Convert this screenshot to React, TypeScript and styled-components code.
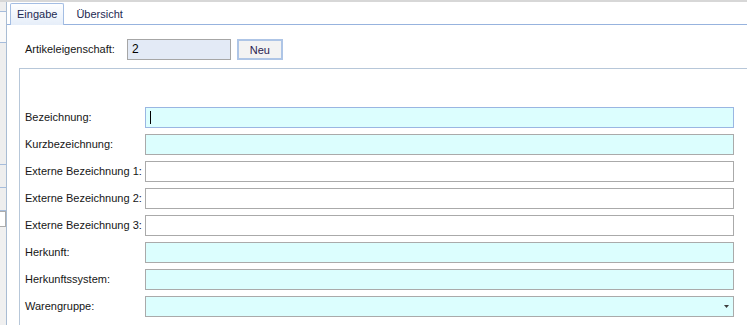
import React from 'react';
import styled, { createGlobalStyle } from 'styled-components';

type Tone = 'cyan' | 'white';

interface FieldDef {
    label: string;
    tone: Tone;
    focused?: boolean;
    dropdown?: boolean;
}

const fields: FieldDef[] = [
    { label: 'Bezeichnung:', tone: 'cyan', focused: true },
    { label: 'Kurzbezeichnung:', tone: 'cyan' },
    { label: 'Externe Bezeichnung 1:', tone: 'white' },
    { label: 'Externe Bezeichnung 2:', tone: 'white' },
    { label: 'Externe Bezeichnung 3:', tone: 'white' },
    { label: 'Herkunft:', tone: 'cyan' },
    { label: 'Herkunftssystem:', tone: 'cyan' },
    { label: 'Warengruppe:', tone: 'cyan', dropdown: true },
];

const DropArrow = () => (
    <svg width="6" height="4" viewBox="0 0 6 4">
        <polygon points="0,0 5,0 2.5,3" fill="#3c3c3c" />
    </svg>
);

export default function App() {
    return (
        <>
            <GlobalStyle />
            <Page>
                <TopStrip />
                <Body>
                    <LeftStrip>
                        <StripCell $h={9} />
                        <StripCell $h={30} $light />
                        <StripCell $h={121} />
                        <StripCell $h={22} />
                        <StripCell $h={22} />
                        <StripBox />
                    </LeftStrip>
                    <TabControl>
                        <TabList>
                            <Tab $active>Eingabe</Tab>
                            <Tab>Übersicht</Tab>
                        </TabList>
                        <TabPanel>
                            <PropertyRow>
                                <Label>Artikeleigenschaft:</Label>
                                <NumberBox>2</NumberBox>
                                <Button>Neu</Button>
                            </PropertyRow>
                            <GroupBox>
                                <FieldGrid>
                                    {fields.map((f) => (
                                        <React.Fragment key={f.label}>
                                            <Label>{f.label}</Label>
                                            <FieldBox $tone={f.tone} $focused={f.focused} $dropdown={f.dropdown}>
                                                {f.focused && <Caret />}
                                                {f.dropdown && <DropArrow />}
                                            </FieldBox>
                                        </React.Fragment>
                                    ))}
                                </FieldGrid>
                            </GroupBox>
                        </TabPanel>
                    </TabControl>
                </Body>
            </Page>
        </>
    );
}

const GlobalStyle = createGlobalStyle`
    html, body {
        margin: 0;
        padding: 0;
        background: #ffffff;
    }
    body {
        font-family: "Liberation Sans", Arial, sans-serif;
        font-size: 11px;
        color: #141414;
    }
`;

const Page = styled.div`
    width: 747px;
    height: 325px;
    display: flex;
    flex-direction: column;
    overflow: hidden;
    background: #ffffff;
`;

const TopStrip = styled.div`
    height: 2px;
    flex-shrink: 0;
    background: #d7d7d7;
`;

const Body = styled.div`
    flex: 1;
    display: flex;
    min-height: 0;
`;

const LeftStrip = styled.div`
    width: 6px;
    flex-shrink: 0;
    border-right: 1px solid #a9bcd3;
    background: #f0f0f0;
    display: flex;
    flex-direction: column;
`;

const StripCell = styled.div<{ $h: number; $light?: boolean }>`
    height: ${(p) => p.$h}px;
    flex-shrink: 0;
    border-bottom: 1px solid #a6bcdb;
    background: ${(p) => (p.$light ? '#f9f9f9' : '#eeeeee')};
`;

const StripBox = styled.div`
    height: 14px;
    border: 1px solid #acacac;
    border-left: none;
    background: #ffffff;
`;

const TabControl = styled.div`
    flex: 1;
    display: flex;
    flex-direction: column;
    min-width: 0;
`;

const TabList = styled.div`
    display: flex;
    align-items: flex-end;
    height: 22px;
    padding: 0 0 0 3px;
    box-sizing: border-box;
    border-bottom: 1px solid #97b3de;
    margin-top: 1px;
`;

const Tab = styled.div<{ $active?: boolean }>`
    height: ${(p) => (p.$active ? '22px' : '20px')};
    box-sizing: border-box;
    padding: ${(p) => (p.$active ? '4px 6px 0 6px' : '3px 6px 0 7px')};
    margin-bottom: ${(p) => (p.$active ? '-1px' : '0')};
    margin-left: ${(p) => (p.$active ? '0' : '4px')};
    border: 1px solid ${(p) => (p.$active ? '#a3bde3' : 'transparent')};
    border-bottom: none;
    border-radius: 2px 2px 0 0;
    background: ${(p) => (p.$active ? 'linear-gradient(#fdfeff, #e6eef9)' : 'transparent')};
    color: #1d2a52;
    white-space: nowrap;
`;

const TabPanel = styled.div`
    flex: 1;
    display: flex;
    flex-direction: column;
    padding-left: 12px;
    min-height: 0;
`;

const PropertyRow = styled.div`
    display: flex;
    align-items: center;
    height: 21px;
    margin-top: 14px;
    padding-left: 6px;
`;

const Label = styled.span`
    color: #161616;
    white-space: nowrap;
    line-height: 21px;
`;

const NumberBox = styled.div`
    width: 104px;
    height: 21px;
    box-sizing: border-box;
    margin-left: 12px;
    padding: 3px 4px;
    border: 1px solid #a6a6a6;
    background: #e3eaf6;
    color: #000000;
    font-size: 12px;
    line-height: 13px;
`;

const Button = styled.div`
    width: 46px;
    height: 21px;
    box-sizing: border-box;
    margin-left: 6px;
    border: 2px solid #aec5e6;
    background: #f3f3f3;
    color: #2a2150;
    display: flex;
    align-items: center;
    justify-content: center;
`;

const GroupBox = styled.div`
    flex: 1;
    margin-top: 8px;
    border-top: 1px solid #b7c7d9;
    border-left: 1px solid #b7c7d9;
    padding: 38px 0 0 5px;
`;

const FieldGrid = styled.div`
    display: grid;
    grid-template-columns: 120px 589px;
    row-gap: 6px;
    align-items: center;
`;

const FieldBox = styled.div<{ $tone: Tone; $focused?: boolean; $dropdown?: boolean }>`
    height: 21px;
    box-sizing: border-box;
    border: 1px solid ${(p) => (p.$focused ? '#9ab6e2' : '#aaaaaa')};
    background: ${(p) => (p.$tone === 'cyan' ? '#dcfefe' : '#ffffff')};
    display: flex;
    align-items: center;
    justify-content: ${(p) => (p.$dropdown ? 'flex-end' : 'flex-start')};
    padding: ${(p) => (p.$dropdown ? '0 3px 0 0' : '0 0 0 4px')};
`;

const Caret = styled.div`
    width: 1px;
    height: 13px;
    background: #000000;
`;
